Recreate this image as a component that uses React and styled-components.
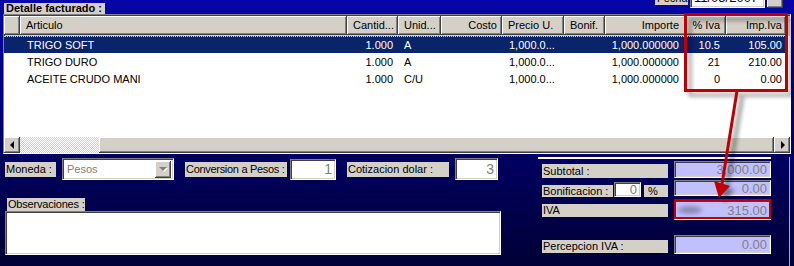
import React from 'react';
import styled, { createGlobalStyle, css } from 'styled-components';

const GlobalStyle = createGlobalStyle`
  html, body { margin: 0; padding: 0; }
  body {
    width: 794px;
    height: 266px;
    overflow: hidden;
    background: linear-gradient(180deg, #0606a8 0%, #03038a 25%, #000066 55%, #00004a 80%, #000036 100%);
    font-family: "Liberation Sans", Arial, sans-serif;
    font-size: 11px;
    color: #000;
  }
`;

const sunken = css`
  box-sizing: border-box;
  border: 1px solid;
  border-color: #808080 #ffffff #ffffff #808080;
  box-shadow: inset 1px 1px #404040, inset -1px -1px #d4d0c8;
`;

const raised = css`
  box-sizing: border-box;
  background: #d4d0c8;
  box-shadow: inset -1px -1px #404040, inset 1px 1px #ffffff, inset -2px -2px #808080;
`;

const Page = styled.div`
  position: relative;
  width: 794px;
  height: 266px;
  display: flex;
  flex-direction: column;
`;

const TopBar = styled.div`
  display: flex;
  align-items: flex-start;
  height: 14px;
  flex: none;
`;

const SectionTitle = styled.div`
  margin: 3px 0 0 4px;
  height: 11px;
  line-height: 11px;
  padding: 0 3px 0 2px;
  background: #d4d0c8;
  font-weight: bold;
  font-size: 11px;
  white-space: nowrap;
  overflow: hidden;
`;

const FechaGroup = styled.div`
  margin-left: auto;
  margin-right: 11px;
  height: 8px;
  overflow: hidden;
  display: flex;
  align-items: flex-end;
  gap: 2px;
`;

const FechaLabel = styled.div`
  width: 33px;
  height: 14px;
  margin-bottom: 3px;
  background: #d4d0c8;
  line-height: 14px;
  padding-left: 2px;
  box-sizing: border-box;
  white-space: nowrap;
`;

const FechaInput = styled.div`
  ${sunken};
  width: 75px;
  height: 20px;
  background: #fff;
  font-size: 13px;
  line-height: 18px;
  padding-left: 3px;
  white-space: nowrap;
  overflow: hidden;
`;

const FechaButton = styled.div`
  ${raised};
  width: 16px;
  height: 20px;
`;

const Grid = styled.div`
  margin-left: 3px;
  width: 788px;
  height: 140px;
  display: flex;
  flex-direction: column;
  background: #d4d0c8;
  flex: none;
  ${sunken};
`;

const HeaderRow = styled.div`
  display: flex;
  height: 20px;
  flex: none;
  margin-top: 1px;
`;

const HeaderCell = styled.div`
  box-sizing: border-box;
  width: ${p => p.$w}px;
  flex: none;
  height: 19px;
  background: #d4d0c8;
  border-right: 1px solid #404040;
  border-bottom: 1px solid #404040;
  box-shadow: inset 1px 1px #ffffff, inset -1px -1px #808080;
  line-height: 18px;
  text-align: ${p => p.$align};
  padding: 0 ${p => p.$pr}px 0 ${p => p.$pl}px;
  white-space: nowrap;
  overflow: hidden;
`;

const Body = styled.div`
  flex: 1;
  background: #fff;
  overflow: hidden;
`;

const DataRow = styled.div`
  display: flex;
  height: 17px;
  box-sizing: border-box;
  background: ${p => (p.$selected ? '#0a246a' : 'transparent')};
  color: ${p => (p.$selected ? '#fff' : '#000')};
  border-top: 1px dotted ${p => (p.$selected ? '#d4d0c8' : 'transparent')};
  width: 782px;
`;

const DataCell = styled.div`
  box-sizing: border-box;
  width: ${p => p.$w}px;
  flex: none;
  line-height: 16px;
  text-align: ${p => p.$align};
  padding: 0 ${p => p.$pr}px 0 ${p => p.$pl}px;
  white-space: nowrap;
  overflow: hidden;
`;

const ScrollBar = styled.div`
  display: flex;
  height: 16px;
  flex: none;
`;

const ScrollArrow = styled.div`
  ${raised};
  width: 16px;
  height: 16px;
  flex: none;
  display: flex;
  align-items: center;
  justify-content: center;
`;

const ScrollTrack = styled.div`
  width: ${p => p.$w}px;
  flex: none;
  background-color: #d4d0c8;
  background-image: conic-gradient(#ffffff 25%, #d4d0c8 0 50%, #ffffff 0 75%, #d4d0c8 0);
  background-size: 2px 2px;
`;

const ScrollThumb = styled.div`
  ${raised};
  flex: 1;
`;

const Tri = styled.span`
  width: 0;
  height: 0;
  border-top: 4px solid transparent;
  border-bottom: 4px solid transparent;
  ${p =>
    p.$dir === 'left'
      ? css`border-right: 4px solid #000; margin-right: 1px;`
      : css`border-left: 4px solid #000; margin-left: 1px;`}
`;

const TriDown = styled.span`
  width: 0;
  height: 0;
  border-left: 4px solid transparent;
  border-right: 4px solid transparent;
  border-top: 4px solid #808080;
  filter: drop-shadow(1px 1px 0 #ffffff);
`;

const BottomArea = styled.div`
  display: flex;
  flex: 1;
`;

const LeftColumn = styled.div`
  width: 496px;
  margin-left: 5px;
  padding-top: 4px;
  display: flex;
  flex-direction: column;
`;

const ControlsRow = styled.div`
  display: flex;
  align-items: center;
  height: 22px;
`;

const Caption = styled.div`
  box-sizing: border-box;
  width: ${p => p.$w}px;
  height: ${p => p.$h || 15}px;
  line-height: ${p => p.$h || 15}px;
  margin-left: ${p => p.$ml || 0}px;
  margin-top: ${p => p.$mt || 0}px;
  background: #d4d0c8;
  padding-left: 1px;
  letter-spacing: ${p => p.$ls || 0}px;
  white-space: nowrap;
  overflow: hidden;
  flex: none;
`;

const Combo = styled.div`
  ${sunken};
  width: ${p => p.$w}px;
  height: 22px;
  margin-left: ${p => p.$ml}px;
  background: #fff;
  display: flex;
  align-items: center;
  justify-content: space-between;
  padding: 2px 2px 2px 4px;
  color: #808080;
`;

const ComboButton = styled.div`
  ${raised};
  width: 16px;
  height: 17px;
  display: flex;
  align-items: center;
  justify-content: center;
`;

const NumberBox = styled.div`
  ${sunken};
  width: ${p => p.$w}px;
  height: ${p => p.$h || 21}px;
  margin-left: ${p => p.$ml || 0}px;
  margin-top: ${p => p.$mt || 0}px;
  background: #fff;
  color: #808080;
  font-size: ${p => p.$fs || 14}px;
  text-align: right;
  padding-right: 3px;
  line-height: ${p => (p.$h || 21) - 2}px;
  flex: none;
`;

const Memo = styled.div`
  ${sunken};
  width: 496px;
  height: 44px;
  background: #fff;
`;

const RightPanel = styled.div`
  margin-left: 37px;
  width: 251px;
  margin-top: 3px;
  border-right: 1px solid #a8a8c8;
  display: flex;
  flex-direction: column;
`;

const RuleLine = styled.div`
  width: 233px;
  height: 2px;
  background: #ffffff;
`;

const SummaryRow = styled.div`
  display: flex;
  align-items: flex-start;
  padding-left: 4px;
  margin-top: ${p => p.$mt}px;
  height: ${p => p.$h}px;
`;

const ValueBox = styled.div`
  ${sunken};
  width: 97px;
  height: ${p => p.$h}px;
  margin-left: 6px;
  background: #c0c0ff;
  color: #808080;
  font-size: 13px;
  display: flex;
  align-items: center;
  justify-content: flex-end;
  padding-right: 3px;
  flex: none;
`;

const Overlay = styled.svg`
  position: absolute;
  left: 0;
  top: 0;
  pointer-events: none;
`;

const columns = [
  { w: 16, title: '', hAlign: 'left', pl: 0, pr: 0, dAlign: 'left', dpl: 0, dpr: 0 },
  { w: 327, title: 'Articulo', hAlign: 'left', pl: 6, pr: 0, dAlign: 'left', dpl: 7, dpr: 0, key: 'art' },
  { w: 51, title: 'Cantid...', hAlign: 'left', pl: 6, pr: 0, dAlign: 'right', dpl: 0, dpr: 5, key: 'cant' },
  { w: 43, title: 'Unid...', hAlign: 'left', pl: 6, pr: 0, dAlign: 'left', dpl: 6, dpr: 0, key: 'unid' },
  { w: 61, title: 'Costo', hAlign: 'right', pl: 0, pr: 4, dAlign: 'right', dpl: 0, dpr: 5, key: 'costo' },
  { w: 62, title: 'Precio U.', hAlign: 'left', pl: 6, pr: 0, dAlign: 'left', dpl: 7, dpr: 0, key: 'precio' },
  { w: 41, title: 'Bonif.', hAlign: 'left', pl: 6, pr: 0, dAlign: 'right', dpl: 0, dpr: 5, key: 'bonif' },
  { w: 81, title: 'Importe', hAlign: 'right', pl: 0, pr: 6, dAlign: 'right', dpl: 0, dpr: 7, key: 'importe' },
  { w: 40, title: '% Iva', hAlign: 'right', pl: 0, pr: 5, dAlign: 'right', dpl: 0, dpr: 6, key: 'iva' },
  { w: 60, title: 'Imp.Iva', hAlign: 'right', pl: 0, pr: 3, dAlign: 'right', dpl: 0, dpr: 4, key: 'impiva' },
];

const rows = [
  { art: 'TRIGO SOFT', cant: '1.000', unid: 'A', costo: '', precio: '1,000.0...', bonif: '', importe: '1,000.000000', iva: '10.5', impiva: '105.00', selected: true },
  { art: 'TRIGO DURO', cant: '1.000', unid: 'A', costo: '', precio: '1,000.0...', bonif: '', importe: '1,000.000000', iva: '21', impiva: '210.00' },
  { art: 'ACEITE CRUDO MANI', cant: '1.000', unid: 'C/U', costo: '', precio: '1,000.0...', bonif: '', importe: '1,000.000000', iva: '0', impiva: '0.00' },
];

export default function App() {
  return (
    <Page>
      <GlobalStyle />
      <TopBar>
        <SectionTitle>Detalle facturado :</SectionTitle>
        <FechaGroup>
          <FechaLabel>Fecha :</FechaLabel>
          <FechaInput>11/05/2007</FechaInput>
          <FechaButton />
        </FechaGroup>
      </TopBar>

      <Grid>
        <HeaderRow>
          {columns.map((c, i) => (
            <HeaderCell key={i} $w={c.w} $align={c.hAlign} $pl={c.pl} $pr={c.pr}>
              {c.title}
            </HeaderCell>
          ))}
        </HeaderRow>
        <Body>
          {rows.map((r, ri) => (
            <DataRow key={ri} $selected={r.selected}>
              {columns.map((c, i) => (
                <DataCell key={i} $w={c.w} $align={c.dAlign} $pl={c.dpl} $pr={c.dpr}>
                  {c.key ? r[c.key] : ''}
                </DataCell>
              ))}
            </DataRow>
          ))}
        </Body>
        <ScrollBar>
          <ScrollArrow><Tri $dir="left" /></ScrollArrow>
          <ScrollTrack $w={79} />
          <ScrollThumb />
          <ScrollArrow><Tri $dir="right" /></ScrollArrow>
        </ScrollBar>
      </Grid>

      <BottomArea>
        <LeftColumn>
          <ControlsRow>
            <Caption $w={51}>Moneda :</Caption>
            <Combo $w={112} $ml={6}>
              <span>Pesos</span>
              <ComboButton><TriDown /></ComboButton>
            </Combo>
            <Caption $w={102} $ml={11} $ls={-0.3}>Conversion a Pesos :</Caption>
            <NumberBox $w={46} $ml={3}>1</NumberBox>
            <Caption $w={102} $ml={11}>Cotizacion dolar :</Caption>
            <NumberBox $w={43} $ml={6} $h={22}>3</NumberBox>
          </ControlsRow>
          <Caption $w={78} $h={13} $ml={2} $mt={18} $ls={-0.2}>Observaciones :</Caption>
          <Memo />
        </LeftColumn>

        <RightPanel>
          <RuleLine />
          <SummaryRow $mt={2} $h={17}>
            <Caption $w={126} $h={14} $mt={3}>Subtotal :</Caption>
            <ValueBox $h={17}>3,000.00</ValueBox>
          </SummaryRow>
          <SummaryRow $mt={2} $h={17}>
            <Caption $w={71} $h={12} $mt={5}>Bonificacion :</Caption>
            <NumberBox $w={27} $h={15} $ml={1} $mt={2} $fs={13}>0</NumberBox>
            <Caption $w={24} $h={12} $ml={3} $mt={5}>&nbsp;%</Caption>
            <ValueBox $h={16}>0.00</ValueBox>
          </SummaryRow>
          <SummaryRow $mt={3} $h={20}>
            <Caption $w={126} $h={13} $mt={4}>IVA</Caption>
            <ValueBox $h={20}>315.00</ValueBox>
          </SummaryRow>
          <SummaryRow $mt={15} $h={19}>
            <Caption $w={126} $h={13} $mt={5}>Percepcion IVA :</Caption>
            <ValueBox $h={19}>0.00</ValueBox>
          </SummaryRow>
        </RightPanel>
      </BottomArea>

      <Overlay width="794" height="266" viewBox="0 0 794 266">
        <defs>
          <filter id="blur" x="-20%" y="-20%" width="140%" height="140%">
            <feGaussianBlur stdDeviation="2" />
          </filter>
        </defs>
        <g filter="url(#blur)" opacity="0.4">
          <rect x="690" y="19" width="101" height="76" fill="none" stroke="#000" strokeWidth="3" />
          <line x1="742" y1="97" x2="727" y2="188" stroke="#000" strokeWidth="4" />
          <polygon points="719,186 735,190 724,203" fill="#000" />
          <ellipse cx="690" cy="210" rx="12" ry="4" fill="#000" opacity="0.7" />
        </g>
        <rect x="685.5" y="14.5" width="101" height="76" fill="none" stroke="#c00000" strokeWidth="3" />
        <line x1="737" y1="91" x2="722" y2="184" stroke="#c00000" strokeWidth="3" />
        <polygon points="714,181 730,186 719,198" fill="#c00000" />
        <rect x="675" y="200" width="95" height="18" fill="none" stroke="#c00000" strokeWidth="2" />
      </Overlay>
    </Page>
  );
}
